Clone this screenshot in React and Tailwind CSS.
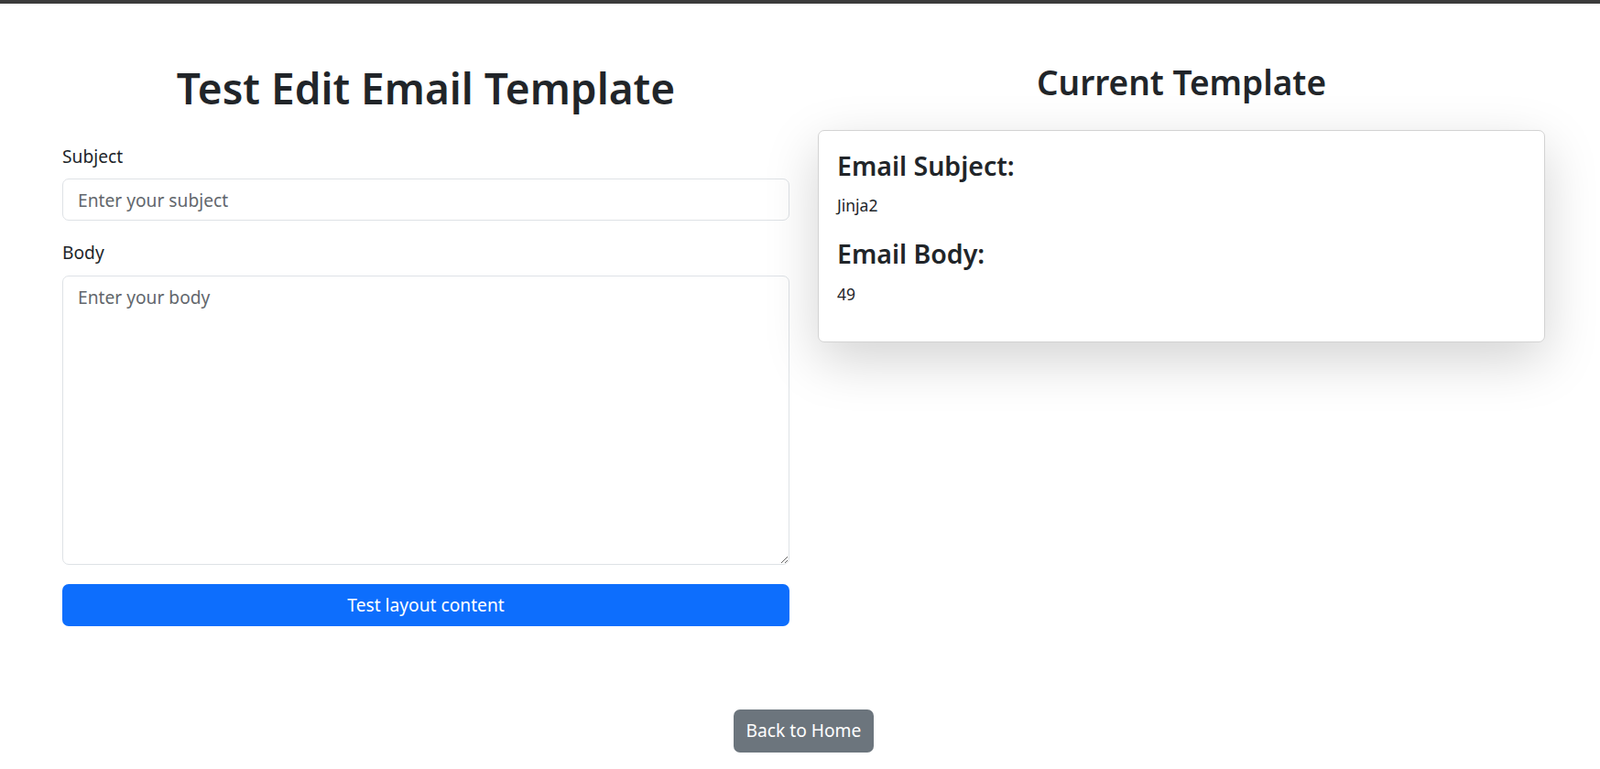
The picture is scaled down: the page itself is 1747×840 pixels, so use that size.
import React, { useState } from 'react';

const App = () => {
  const [subject, setSubject] = useState('');
  const [body, setBody] = useState('');

  return (
    <div className="min-h-screen bg-white text-[#212529] font-['Noto_Sans',sans-serif] text-[19.2px]">
      <div className="h-[4px] bg-[#3b3b3b]" />

      <div className="pl-[68px] pr-[60px] pt-[63px]">
        <div className="grid grid-cols-2 gap-[31px]">
          {/* form column */}
          <div>
            <h1 className="text-center text-[46px] leading-[58px] font-semibold mb-[31px]">Test Edit Email Template</h1>
            <form onSubmit={(e) => e.preventDefault()}>
              <div className="mb-[20px]">
                <label className="block leading-[29px] mb-[10px]">Subject</label>
                <input
                  type="text"
                  value={subject}
                  onChange={(e) => setSubject(e.target.value)}
                  placeholder="Enter your subject"
                  className="block w-full h-[46px] px-[16px] border border-[#dee2e6] rounded-[7px] placeholder:text-[#62676c] outline-none"
                />
              </div>
              <div className="mb-[21px]">
                <label className="block leading-[29px] mb-[11px]">Body</label>
                <textarea
                  value={body}
                  onChange={(e) => setBody(e.target.value)}
                  placeholder="Enter your body"
                  className="block w-full h-[316px] px-[16px] py-[8px] leading-[29px] border border-[#dee2e6] rounded-[7px] placeholder:text-[#62676c] outline-none"
                />
              </div>
              <button type="submit" className="w-full h-[46px] bg-[#0d6efd] text-white rounded-[7px]">
                Test layout content
              </button>
            </form>
          </div>

          {/* preview column */}
          <div>
            <h2 className="text-center text-[37px] leading-[46px] font-semibold mb-[29px]">Current Template</h2>
            <div className="border border-[#d3d3d3] rounded-[7px] bg-white shadow-[0_19px_58px_rgba(0,0,0,0.175)] px-[20px] pt-[21px] pb-[37px]">
              <h4 className="text-[28.5px] leading-[35px] font-semibold mb-[11px]">Email Subject:</h4>
              <p className="leading-[29px] mb-[21px] text-[17.5px]">Jinja2</p>
              <h4 className="text-[28.5px] leading-[35px] font-semibold mb-[12px]">Email Body:</h4>
              <p className="leading-[29px] text-[17.5px]">49</p>
            </div>
          </div>
        </div>

        <div className="flex justify-center mt-[91px] pb-[18px]">
          <button className="h-[47px] px-[14px] bg-[#6c757d] text-white rounded-[7px]">Back to Home</button>
        </div>
      </div>
    </div>
  );
};

export default App;
